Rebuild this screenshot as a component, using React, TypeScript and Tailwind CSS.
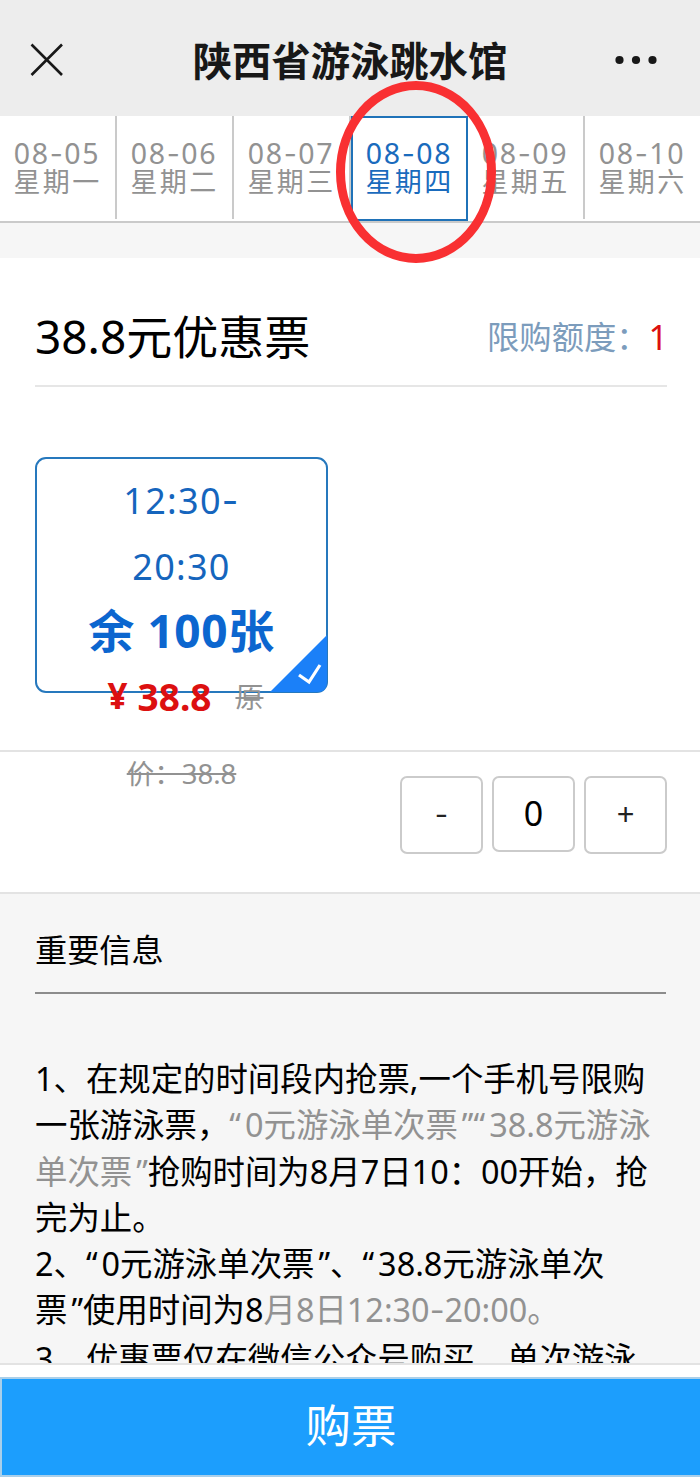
import { useState, type ReactNode } from 'react';

const dates = [
  { month: '08', day: '05', week: '星期一' },
  { month: '08', day: '06', week: '星期二' },
  { month: '08', day: '07', week: '星期三' },
  { month: '08', day: '08', week: '星期四' },
  { month: '08', day: '09', week: '星期五' },
  { month: '08', day: '10', week: '星期六' },
];

const Dash = () => <span className="font-['Inter']">-</span>;

const Quoted = ({ children }: { children: ReactNode }) => (
  <>
    <span className="mr-1">“</span>
    {children}
    <span className="ml-1">”</span>
  </>
);

const Header = () => (
  <header className="flex h-[116px] shrink-0 items-center justify-between bg-[#ededed] px-[30px] pt-[4px]">
    <svg className="h-[34px] w-[34px]" viewBox="0 0 34 34" fill="none" stroke="#181818" strokeWidth="2.6">
      <path d="M1.5 1.5 32 32M32 1.5 1.5 32" />
    </svg>
    <h1 className="ml-[21px] whitespace-nowrap pt-1 text-[39.3px] font-semibold leading-none text-[#181818]">陕西省游泳跳水馆</h1>
    <svg className="mr-[13px] h-[10px] w-[42px]" viewBox="0 0 42 10" fill="#181818">
      <circle cx="4.5" cy="5" r="4.1" />
      <circle cx="21" cy="5" r="4.1" />
      <circle cx="37.5" cy="5" r="4.1" />
    </svg>
  </header>
);

const DateTabs = () => {
  const [selected, setSelected] = useState(3);

  return (
    <nav className="relative flex h-[107px] shrink-0 border-b-2 border-[#cacaca] bg-white">
      {dates.map((d, i) => (
        <button
          key={d.day}
          onClick={() => setSelected(i)}
          className={
            i === selected
              ? 'flex h-[105px] w-[117px] shrink-0 flex-col items-center border-2 border-[#1f72b8] pt-[21px] text-[#1a6bbd]'
              : 'flex h-[103px] w-[117px] shrink-0 flex-col items-center border-r-2 border-[#cacaca] pt-[23px] text-[#929292] last:border-r-0'
          }
        >
          <span className="pr-[1px] text-[28.5px] leading-[29px] tracking-[1.6px]">
            {d.month}
            <Dash />
            {d.day}
          </span>
          <span className="text-[27px] leading-[27px] tracking-[2.4px]">{d.week}</span>
        </button>
      ))}
      {/* Hand-drawn mark around the selected day */}
      <svg className="pointer-events-none absolute left-[335px] top-[-36px] h-[184px] w-[162px]" viewBox="0 0 162 184" fill="none">
        <ellipse cx="81" cy="92" rx="75.5" ry="86.5" stroke="#f93032" strokeWidth="9" />
      </svg>
    </nav>
  );
};

const TicketCard = () => (
  <div className="relative mt-[70px] h-[236px] w-[293px] rounded-[11px] border-2 border-[#2678bd] text-center text-[#1565bd]">
    <svg className="absolute bottom-[-1px] right-[-1px] h-[57px] w-[57px]" viewBox="0 0 57 57">
      <path d="M57 0V47Q57 57 47 57H0Z" fill="#1b80f8" />
      <path d="m29 40 10 7 11-17" fill="none" stroke="#fff" strokeWidth="3.2" />
    </svg>
    <div className="relative pt-[9px]">
      <p className="text-[36px] leading-[65px] tracking-[1.3px]">
        12:30
        <Dash />
        <br />
        20:30
      </p>
      <p className="whitespace-pre text-[46px] font-bold leading-[63px] tracking-[0.6px] text-[#0c66cf]">余 100张</p>
      <p className="flex h-[67px] items-center justify-center pl-2 pt-0.5 text-[#dc1010]">
        <span className="mr-[10px] text-[35px] font-bold">¥</span>
        <span className="text-[37px] font-bold">38.8</span>
        <span className="ml-6 text-[28px] text-[#929292] line-through">原</span>
      </p>
      <p className="h-[84px] whitespace-nowrap text-[27.5px] leading-[90px] text-[#929292] line-through">价：38.8</p>
    </div>
  </div>
);

const Stepper = () => {
  const [count, setCount] = useState(0);
  const box = 'flex w-[83px] items-center justify-center rounded-[7px] border-2 border-[#cbcbcb] bg-white';

  return (
    <div className="flex h-[142px] items-start justify-end gap-[9px] border-t-2 border-[#e3e3e3] pr-[33px] pt-[24px]">
      <button onClick={() => setCount(Math.max(0, count - 1))} className={`${box} h-[78px] font-['Inter'] text-[29px] text-[#222]`}>
        -
      </button>
      <span className={`${box} h-[76px] pb-0.5 text-[34px] text-black`}>{count}</span>
      <button onClick={() => setCount(count + 1)} className={`${box} h-[78px] pb-1 text-[31px] text-[#222]`}>
        +
      </button>
    </div>
  );
};

const Notice = () => (
  <section className="h-[473px] shrink-0 overflow-hidden border-b-2 border-t-2 border-[#e3e3e3] bg-[#f6f6f6] px-[35px] text-black">
    <h3 className="pt-[33px] text-[32.2px] leading-[46px]">重要信息</h3>
    <hr className="mr-[-1px] mt-[19px] border-t-2 border-[#8c8c8c]" />
    <div className="mt-[61px] whitespace-nowrap text-[32.4px] leading-[46.3px]">
      <p>1、在规定的时间段内抢票,一个手机号限购</p>
      <p>
        一张游泳票，
        <span className="text-[#929292]">
          <Quoted>0元游泳单次票</Quoted>
          <span className="mr-1">“</span>38.8元游泳
        </span>
      </p>
      <p>
        <span className="text-[#929292]">
          单次票<span className="ml-1">”</span>
        </span>
        抢购时间为8月7日10：00开始，抢
      </p>
      <p>完为止。</p>
      <p>
        2、<Quoted>0元游泳单次票</Quoted>、<span className="mr-1">“</span>38.8元游泳单次
      </p>
      <p>
        票<span className="ml-1">”</span>使用时间为8
        <span className="text-[#929292]">
          月8日12:30
          <Dash />
          20:00。
        </span>
      </p>
      <p>3、优惠票仅在微信公众号购买，单次游泳</p>
    </div>
  </section>
);

export default function App() {
  return (
    <div
      lang="zh-CN"
      className="flex h-[1477px] w-[700px] flex-col overflow-hidden bg-white font-['Noto_Sans','Noto_Sans_CJK_SC',sans-serif]"
    >
      <Header />
      <DateTabs />
      <div className="h-[35px] shrink-0 bg-[#f6f6f6]" />

      <main className="h-[492px] shrink-0 px-[35px]">
        <div className="mr-[-2px] flex h-[129px] items-center justify-between border-b-2 border-[#e6e6e6] pt-[28px]">
          <h2 className="text-[46px] leading-none text-black">38.8元优惠票</h2>
          <p className="mr-[-1px] flex items-center pt-0.5 text-[32.3px] leading-none text-[#7c9cbc]">
            限购额度：<span className="text-[34px] text-[#dc1010]">1</span>
          </p>
        </div>
        <TicketCard />
      </main>

      <Stepper />
      <Notice />

      <footer className="mt-[12px] flex flex-1 flex-col">
        <button className="flex-1 border-2 border-r-0 border-[#a9cfea] bg-[#1c9efd] pb-[2px] text-[45.5px] leading-none text-white">
          购票
        </button>
      </footer>
    </div>
  );
}
